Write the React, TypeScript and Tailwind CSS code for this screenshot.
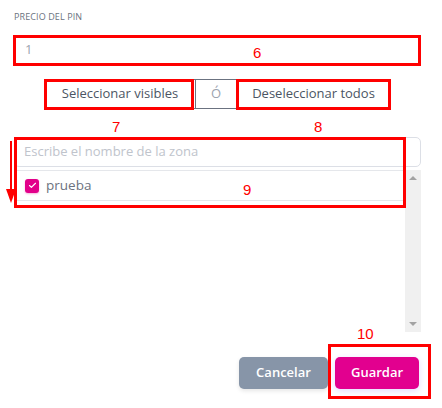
import { Check } from 'lucide-react'

function Mark({ className }: { className: string }) {
  return <div className={`absolute border-[3px] border-[#ff0000] pointer-events-none ${className}`} />
}

function Num({ className, children }: { className: string; children: React.ReactNode }) {
  return (
    <span className={`absolute text-[15px] leading-none text-[#ff0000] font-['Liberation_Sans',sans-serif] ${className}`}>
      {children}
    </span>
  )
}

export default function App() {
  return (
    <div className="relative w-[442px] h-[408px] bg-white font-['Open_Sans',sans-serif] text-[#4b5563] overflow-hidden">
      <div className="pl-[14px] pr-[21px] pt-[11px]">
        <label className="block text-[9px] font-medium tracking-[0.1px] uppercase text-[#6b7280] leading-[11px]">
          Precio del pin
        </label>
        <div className="mt-[13px] h-[30px] flex items-center px-[10px] border border-[#d1d5db] rounded-[4px] text-[13px] text-[#9ca3af]">
          1
        </div>

        <div className="mt-[14px] flex justify-center">
          <div className="flex h-[30px] border border-[#6b7280] text-[13px] text-[#4b5563]">
            <button className="w-[149px] flex items-center justify-center">Seleccionar visibles</button>
            <span className="w-[43px] flex items-center justify-center border-x border-[#6b7280] text-[#9ca3af]">Ó</span>
            <button className="w-[152px] flex items-center justify-center">Deseleccionar todos</button>
          </div>
        </div>

        <div className="mt-[28px] h-[30px] flex items-center px-[9px] border border-[#dcdfe6] rounded-[5px] text-[13px] text-[#c0c4cc]">
          Escribe el nombre de la zona
        </div>

        <div className="mt-[3px] flex h-[162px]">
          <div className="flex-1">
            <div className="h-[31px] flex items-center gap-[7px] pl-[11px] border-y border-[#e5e7eb]">
              <span className="w-[14px] h-[14px] rounded-[3px] bg-[#e2008a] flex items-center justify-center shadow-[0_1px_2px_rgba(226,0,138,0.3)]">
                <Check className="w-[9px] h-[9px] text-white" strokeWidth={3} />
              </span>
              <span className="text-[13.5px] text-[#6b7280]">prueba</span>
            </div>
          </div>
          <div className="w-[16px] bg-[#f0f0f0] flex flex-col items-center justify-between py-[6px]">
            <span className="w-0 h-0 border-x-[4px] border-x-transparent border-b-[4px] border-b-[#a3a3a3]" />
            <span className="w-0 h-0 border-x-[4px] border-x-transparent border-t-[4px] border-t-[#a3a3a3]" />
          </div>
        </div>

        <div className="mt-[25px] flex justify-end gap-[7px] pr-[2px]">
          <button className="w-[89px] h-[32px] rounded-[5px] bg-[#8795a8] text-white text-[13px] font-semibold shadow-[0_2px_4px_rgba(0,0,0,0.1)]">
            Cancelar
          </button>
          <button className="w-[84px] h-[32px] rounded-[5px] bg-[#e2008f] text-white text-[13px] font-semibold shadow-[0_2px_6px_rgba(120,80,255,0.2)]">
            Guardar
          </button>
        </div>
      </div>

      <Mark className="left-[13px] top-[35px] w-[408px] h-[31px]" />
      <Num className="left-[253px] top-[45px]">6</Num>
      <Mark className="left-[44px] top-[79px] w-[150px] h-[31px]" />
      <Mark className="left-[236px] top-[79px] w-[155px] h-[31px]" />
      <Num className="left-[112px] top-[119px]">7</Num>
      <Num className="left-[314px] top-[119px]">8</Num>
      <Mark className="left-[14px] top-[137px] w-[392px] h-[71px]" />
      <Num className="left-[243px] top-[182px]">9</Num>
      <Mark className="left-[328px] top-[344px] w-[103px] h-[55px]" />
      <Num className="left-[357px] top-[326px]">10</Num>

      <svg className="absolute left-[5px] top-[141px]" width="12" height="62" viewBox="0 0 12 62">
        <line x1="6" y1="0" x2="6" y2="54" stroke="#ff0000" strokeWidth="2" />
        <polygon points="1,48 11,48 6,62" fill="#ff0000" />
      </svg>
    </div>
  )
}
